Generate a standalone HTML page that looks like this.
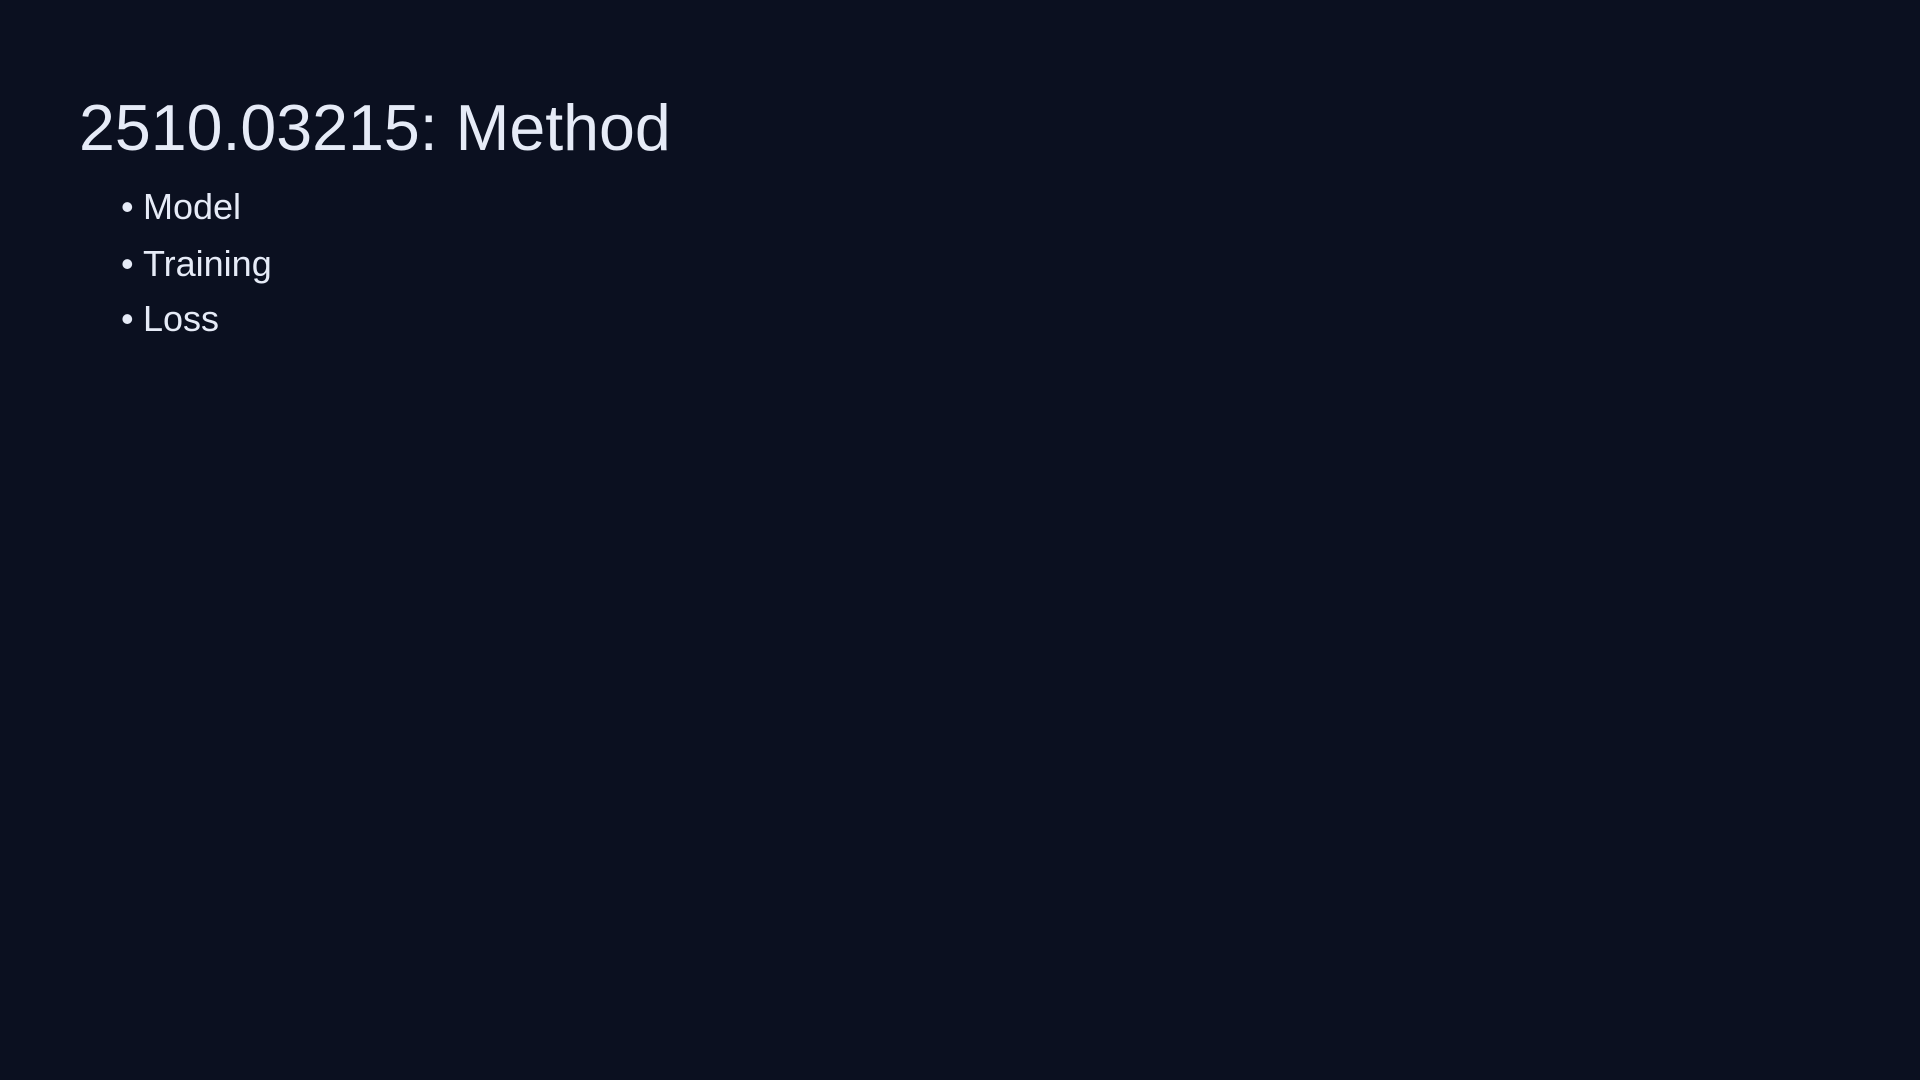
<!DOCTYPE html>
<html><head><meta charset="utf-8"><style>
html,body{margin:0;padding:0;}
body{width:1920px;height:1080px;background:#0b1020;overflow:hidden;position:relative;font-family:"Liberation Sans",Arial,sans-serif;color:#e6ebf7;}
.t{position:absolute;left:79px;top:95.5px;font-size:64.5px;line-height:64.5px;white-space:nowrap;}
.b{position:absolute;font-size:36px;line-height:36px;white-space:nowrap;}
.b span{position:absolute;left:-22px;}
</style></head><body>
<div class="t">2510.03215: Method</div>
<div class="b" style="left:143px;top:189px"><span>•</span>Model</div>
<div class="b" style="left:143px;top:246px"><span>•</span>Training</div>
<div class="b" style="left:143px;top:301px"><span>•</span>Loss</div>
</body></html>
